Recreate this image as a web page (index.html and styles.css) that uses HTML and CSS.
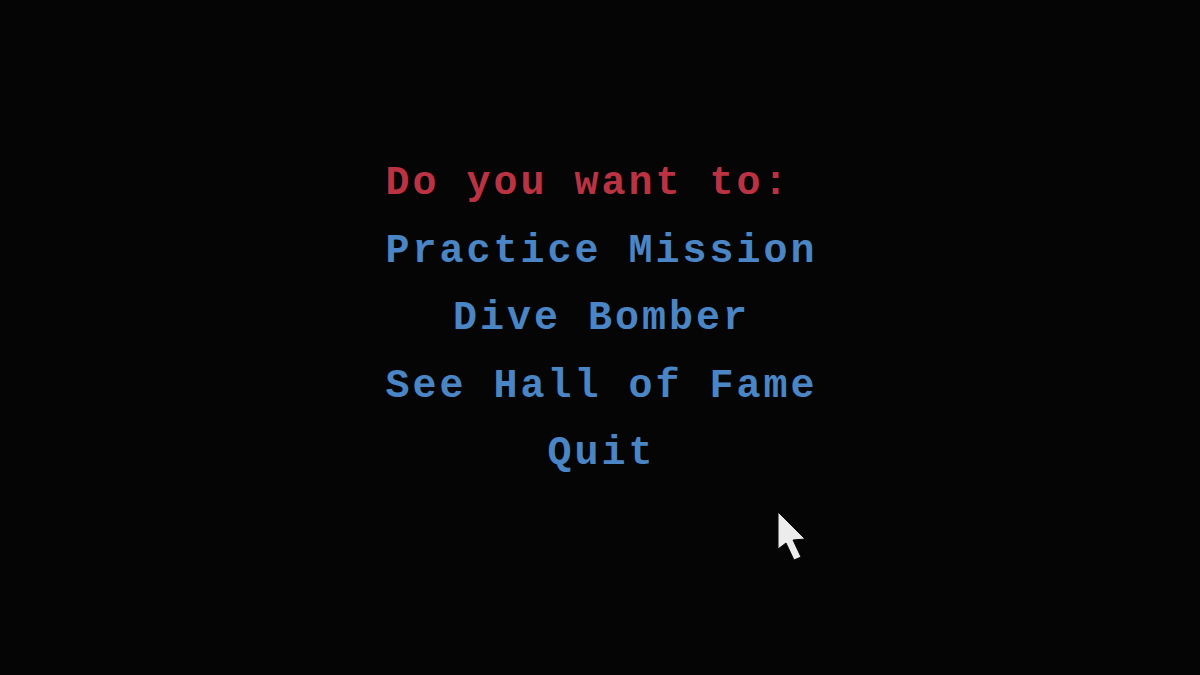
FILE: index.html
```html
<!DOCTYPE html>
<html>
<head>
<meta charset="utf-8">
<link rel="stylesheet" href="styles.css">
</head>
<body>
<main class="screen">
  <div class="menu">
    <div class="line prompt">Do you want to:</div>
    <div class="line option">Practice Mission</div>
    <div class="line option">Dive Bomber</div>
    <div class="line option">See Hall of Fame</div>
    <div class="line option">Quit</div>
  </div>
  <svg class="cursor" width="32" height="52" viewBox="0 0 32 52">
    <path d="M2 2 L2 39 L10 33 L18 50 L25 47 L17 30 L29 29 Z" fill="#ececec" stroke="#0a0a0a" stroke-width="1" stroke-linejoin="miter"/>
  </svg>
</main>
</body>
</html>
```
FILE: styles.css
```css
html, body {
  margin: 0;
  padding: 0;
  background: #050505;
}
.screen {
  position: relative;
  width: 1200px;
  height: 675px;
  box-sizing: border-box;
  padding-top: 150px;
  display: flex;
  flex-direction: column;
  align-items: center;
  background: #050505;
  overflow: hidden;
}
.menu {
  display: flex;
  flex-direction: column;
  align-items: center;
  padding-left: 3px;
}
.line {
  font-family: "Liberation Mono", monospace;
  font-weight: bold;
  font-size: 40px;
  letter-spacing: 3px;
  line-height: 67.5px;
  height: 67.5px;
  white-space: pre;
}
.prompt {
  color: #bb3343;
  align-self: flex-start;
}
.option {
  color: #4a85c6;
}
.cursor {
  position: absolute;
  left: 776px;
  top: 510px;
}
```
